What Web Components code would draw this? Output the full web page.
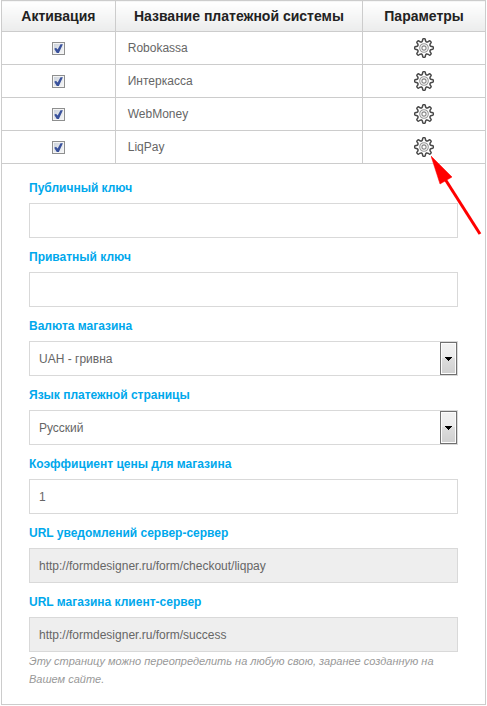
<!DOCTYPE html>
<html lang="ru">
<head>
<meta charset="utf-8">
<title>Платежные системы</title>
<style>
  body {
    margin: 0;
    padding: 0 1px;
    background: #ffffff;
    color: #666666;
    font-family: "Liberation Sans", Arial, sans-serif;
    font-size: 12px;
    line-height: 18px;
  }
</style>
</head>
<body>
<payment-systems active="LiqPay">
  <form-field label="Публичный ключ" name="public_key"></form-field>
  <form-field label="Приватный ключ" name="private_key"></form-field>
  <select-field label="Валюта магазина" name="currency" options="UAH - гривна"></select-field>
  <select-field label="Язык платежной страницы" name="language" options="Русский"></select-field>
  <form-field label="Коэффициент цены для магазина" name="ratio" value="1"></form-field>
  <form-field label="URL уведомлений сервер-сервер" name="server_url" value="http://formdesigner.ru/form/checkout/liqpay" readonly></form-field>
  <form-field label="URL магазина клиент-сервер" name="result_url" value="http://formdesigner.ru/form/success" readonly>
    Эту страницу можно переопределить на любую свою, заранее созданную на Вашем сайте.
  </form-field>
</payment-systems>

<script>
const SYSTEMS = ['Robokassa', 'Интеркасса', 'WebMoney', 'LiqPay'];

const FIELD_STYLES = `
  :host {
    display: block;
  }

  label {
    color: #00a8ec;
    display: block;
    font-weight: bold;
    margin-bottom: 6px;
  }

  input,
  select {
    appearance: none;
    background: #ffffff;
    border: 1px solid #d9d9d9;
    border-radius: 0;
    box-sizing: border-box;
    color: #666666;
    display: block;
    font: inherit;
    height: 35px;
    margin: 0;
    padding: 0 9px;
    width: 100%;
  }
`;

function gearPath(teeth, outer, inner) {
  const step = (Math.PI * 2) / teeth;
  const point = (angle, radius) =>
    `${(Math.sin(angle) * radius).toFixed(2)} ${(-Math.cos(angle) * radius).toFixed(2)}`;
  let path = '';
  for (let i = 0; i < teeth; i += 1) {
    const a = i * step;
    path += `${i ? 'L' : 'M'}${point(a - 0.19, inner)}Q${point(a - 0.17, outer)} ${point(a - 0.08, outer)}`;
    path += `L${point(a + 0.08, outer)}Q${point(a + 0.17, outer)} ${point(a + 0.19, inner)}`;
    path += `Q${point(a + step / 2, inner - 2.2)} ${point(a + step - 0.19, inner)}`;
  }
  return `${path}Z`;
}

class GearButton extends HTMLElement {
  connectedCallback() {
    this.attachShadow({ mode: 'open' }).innerHTML = `
      <style>
        :host {
          display: inline-block;
          vertical-align: top;
        }

        button {
          background: none;
          border: 0;
          cursor: pointer;
          display: block;
          padding: 0;
        }

        svg {
          display: block;
        }
      </style>
      <button type="button" aria-label="Параметры ${this.getAttribute('for')}">
        <svg width="22" height="22" viewBox="-11 -11 22 22" fill="none">
          <path d="${gearPath(8, 9.3, 7.7)}" stroke="#484848" stroke-width="1.5" stroke-linejoin="round"/>
          <circle r="4.3" stroke="#999999" stroke-width="1.1"/>
          <circle r="2.1" stroke="#888888" stroke-width="1.1"/>
        </svg>
      </button>
    `;
  }
}

class FormField extends HTMLElement {
  connectedCallback() {
    const name = this.getAttribute('name');
    this.attachShadow({ mode: 'open' }).innerHTML = `
      <style>
        ${FIELD_STYLES}
        input:read-only {
          background: #eeeeee;
        }

        .hint {
          color: #999999;
          font-size: 11px;
          font-style: italic;
        }
      </style>
      <label for="${name}">${this.getAttribute('label')}</label>
      <input type="text" id="${name}" name="${name}">
      <div class="hint"><slot></slot></div>
    `;
    const input = this.shadowRoot.querySelector('input');
    input.value = this.getAttribute('value') || '';
    input.readOnly = this.hasAttribute('readonly');
  }
}

class SelectField extends HTMLElement {
  connectedCallback() {
    const name = this.getAttribute('name');
    const options = this.getAttribute('options').split('|');
    this.attachShadow({ mode: 'open' }).innerHTML = `
      <style>
        ${FIELD_STYLES}
        .box {
          position: relative;
        }

        .arrow {
          align-items: center;
          background: linear-gradient(#f2f2f2, #ebebeb 50%, #dddddd 50%, #cfcfcf);
          border: 1px solid #707070;
          bottom: 1px;
          box-shadow: inset 0 0 0 1px #fcfcfc;
          box-sizing: border-box;
          display: flex;
          justify-content: center;
          pointer-events: none;
          position: absolute;
          right: 1px;
          top: 1px;
          width: 17px;
        }
      </style>
      <label for="${name}">${this.getAttribute('label')}</label>
      <div class="box">
        <select id="${name}" name="${name}">
          ${options.map((option) => `<option>${option}</option>`).join('')}
        </select>
        <span class="arrow">
          <svg width="7" height="4" viewBox="0 0 7 4" shape-rendering="crispEdges"><path d="M0 0h7v1h-1v1h-1v1h-1v1h-1v-1h-1v-1h-1v-1h-1z" fill="#000000"/></svg>
        </span>
      </div>
    `;
  }
}

class PaymentSystems extends HTMLElement {
  connectedCallback() {
    this.attachShadow({ mode: 'open' });
    this.render();
  }

  renderRow(system, index) {
    const pointer = system === this.getAttribute('active')
      ? `<svg class="pointer" width="52" height="80" viewBox="0 0 52 80" aria-hidden="true">
           <path d="M14 23L49 78" stroke="#ff0000" stroke-width="3"/>
           <path d="M0 0L9 28L21 21Z" fill="#ff0000" stroke="#ff0000" stroke-width="0.5"/>
         </svg>`
      : '';
    return `
      <tr>
        <td class="center"><input type="checkbox" id="system-${index}" checked></td>
        <td><label for="system-${index}">${system}</label></td>
        <td class="center"><span class="tools"><gear-button for="${system}"></gear-button>${pointer}</span></td>
      </tr>
    `;
  }

  render() {
    this.shadowRoot.innerHTML = `
      <style>
        :host {
          display: block;
        }

        table {
          border-collapse: collapse;
          table-layout: fixed;
          width: 100%;
        }

        .activation {
          width: 23.5%;
        }

        .params {
          width: 25.4%;
        }

        th,
        td {
          border: 1px solid #cccccc;
          box-sizing: border-box;
          padding: 0 12px;
        }

        th {
          background: linear-gradient(#ffffff, #ebecec);
          color: #222222;
          font-size: 14px;
          height: 31px;
          padding: 0;
          white-space: nowrap;
        }

        td {
          height: 33px;
        }

        .center {
          text-align: center;
        }

        input {
          appearance: none;
          background: linear-gradient(135deg, #c9d0da, #f8f8f8);
          border: 1px solid #8e8f8f;
          box-shadow: inset 0 0 0 1px #f4f4f4;
          box-sizing: border-box;
          display: inline-grid;
          height: 13px;
          margin: 0;
          vertical-align: middle;
          width: 13px;
        }

        input:checked::before {
          background: #3a529c;
          clip-path: polygon(4% 50%, 24% 38%, 42% 58%, 74% 0, 100% 0, 54% 100%, 34% 100%);
          content: '';
          height: 9px;
          margin: 1px;
          width: 9px;
        }

        .tools {
          display: inline-block;
          position: relative;
          vertical-align: middle;
        }

        .pointer {
          left: 18px;
          pointer-events: none;
          position: absolute;
          top: 20px;
        }

        .settings {
          padding: 15px 27px 16px;
        }

        .fields {
          display: grid;
          gap: 10px;
        }
      </style>
      <table>
        <colgroup><col class="activation"><col><col class="params"></colgroup>
        <thead>
          <tr><th>Активация</th><th>Название платежной системы</th><th>Параметры</th></tr>
        </thead>
        <tbody>
          ${SYSTEMS.map((system, index) => this.renderRow(system, index)).join('')}
          <tr><td class="settings" colspan="3"><div class="fields"><slot></slot></div></td></tr>
        </tbody>
      </table>
    `;
  }
}

customElements.define('gear-button', GearButton);
customElements.define('form-field', FormField);
customElements.define('select-field', SelectField);
customElements.define('payment-systems', PaymentSystems);
</script>
</body>
</html>
